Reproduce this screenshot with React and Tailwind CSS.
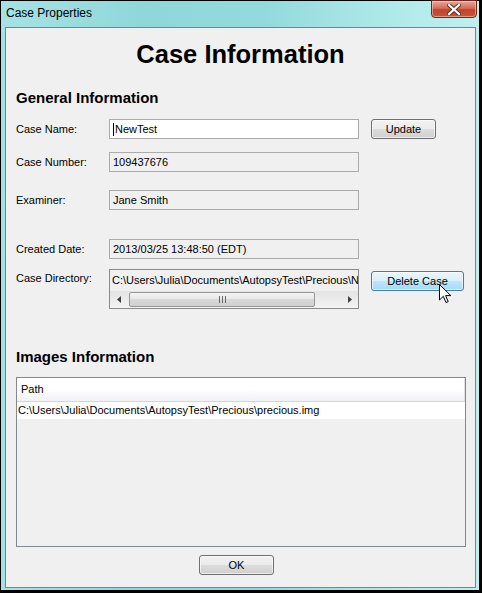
import React from "react";

const F = { fontFamily: '"Liberation Sans", Arial, sans-serif' };

function Field({ children, white, className = "" }) {
  return (
    <div
      className={`h-[20px] w-[250px] border border-[#ababab] flex items-center pl-[3px] text-[11px] text-black ${white ? "bg-white" : "bg-[#f0f0f0]"} ${className}`}
    >
      {children}
    </div>
  );
}

function Btn({ children, className = "", hot }) {
  return (
    <div
      className={`h-[20px] rounded-[3px] border flex items-center justify-center text-[11px] text-black ${
        hot
          ? "border-[#3c7fb1] bg-[linear-gradient(to_bottom,#eaf6fd_0%,#d9f0fc_50%,#bee6fd_50%,#a7d9f5_100%)]"
          : "border-[#707070] bg-[linear-gradient(to_bottom,#f2f2f2_0%,#ebebeb_50%,#dddddd_50%,#cfcfcf_100%)]"
      } shadow-[inset_0_0_0_1px_rgba(255,255,255,0.6)] ${className}`}
    >
      {children}
    </div>
  );
}

function Row({ label, children, className = "" }) {
  return (
    <div className={`flex items-center ${className}`}>
      <div className="w-[93px] text-[11px] leading-[14px] text-black">{label}</div>
      {children}
    </div>
  );
}

export default function App() {
  return (
    <div className="w-[482px] h-[593px] bg-black pt-px pl-px pr-[3px] pb-[3px]" style={F}>
      <div className="h-full w-full flex flex-col bg-[linear-gradient(to_right,#a6e2e4_0%,#8fd7d9_30%,#93dadc_55%,#b3ebeb_85%,#bfefef_100%)]">
        {/* title bar */}
        <div className="h-[26px] flex items-start shrink-0">
          <span className="ml-[5px] mt-[5px] text-[12px] leading-[14px] text-black">Case Properties</span>
          <div className="ml-auto mr-[2px] -mt-px w-[46px] h-[18px] rounded-b-[4px] border border-[#6b2a20] bg-[linear-gradient(to_bottom,#e8a898_0%,#d56c58_45%,#c2432c_55%,#c9543b_100%)] flex items-center justify-center shadow-[inset_0_0_0_1px_rgba(255,220,210,0.5)]">
            <svg width="14" height="11" viewBox="0 0 14 11">
              <path d="M2 1 L12 10 M12 1 L2 10" stroke="#5a2a22" strokeWidth="4" strokeLinecap="square" />
              <path d="M2 1 L12 10 M12 1 L2 10" stroke="#ffffff" strokeWidth="2.2" strokeLinecap="square" />
            </svg>
          </div>
        </div>
        {/* panel */}
        <div className="flex-1 ml-[4px] mr-[3px] mb-[2px] border border-[#6b8a8c] bg-[#f0f0f0] flex flex-col pl-[10px] relative">
          <div className="mt-[12px] h-[28px] text-center text-[25.5px] leading-[28px] font-bold text-black -ml-[10px]">
            Case Information
          </div>
          <div className="mt-[22px] text-[15px] leading-[16px] font-bold text-black">General Information</div>

          <Row label="Case Name:" className="mt-[13px]">
            <Field white>
              <span className="border-l border-black pl-px leading-[13px]">NewTest</span>
            </Field>
            <Btn className="ml-[12px] w-[65px]">Update</Btn>
          </Row>
          <Row label="Case Number:" className="mt-[13px]">
            <Field>109437676</Field>
          </Row>
          <Row label="Examiner:" className="mt-[18px]">
            <Field>Jane Smith</Field>
          </Row>
          <Row label="Created Date:" className="mt-[29px]">
            <Field>2013/03/25 13:48:50 (EDT)</Field>
          </Row>

          <div className="mt-[10px] flex items-start">
            <div className="w-[93px] mt-[2px] text-[11px] leading-[14px] text-black">Case Directory:</div>
            <div className="w-[250px] h-[40px] border border-[#8a8a8a] bg-[#f0f0f0] flex flex-col">
              <div className="pl-[2px] pt-[3px] text-[11px] leading-[14px] text-black whitespace-nowrap overflow-hidden">
                C:\Users\Julia\Documents\AutopsyTest\Precious\NewTest
              </div>
              <div className="mt-auto h-[17px] flex items-center bg-[linear-gradient(to_bottom,#e3e3e3,#f4f4f4)]">
                <div className="w-[17px] h-full flex items-center justify-center">
                  <svg width="4" height="7" viewBox="0 0 4 7"><path d="M4 0 L0 3.5 L4 7 Z" fill="#404040" /></svg>
                </div>
                <div className="ml-[2px] w-[186px] h-[15px] rounded-[2px] border border-[#979797] bg-[linear-gradient(to_bottom,#f3f3f3_0%,#e8e8e8_50%,#d9d9d9_50%,#cfcfcf_100%)] flex items-center justify-center">
                  <svg width="7" height="7" viewBox="0 0 7 7">
                    <path d="M0.5 0 V7 M3.5 0 V7 M6.5 0 V7" stroke="#6a6a6a" strokeWidth="1" />
                  </svg>
                </div>
                <div className="ml-auto w-[17px] h-full flex items-center justify-center">
                  <svg width="4" height="7" viewBox="0 0 4 7"><path d="M0 0 L4 3.5 L0 7 Z" fill="#404040" /></svg>
                </div>
              </div>
            </div>
            <Btn hot className="ml-[12px] mt-[2px] w-[93px]">Delete Case</Btn>
          </div>

          <div className="mt-[40px] text-[15px] leading-[16px] font-bold text-black">Images Information</div>

          <div className="mt-[12px] w-[450px] h-[170px] border border-[#828790] bg-[#f0f0f0] flex flex-col">
            <div className="h-[24px] flex items-center pl-[4px] text-[11px] text-black bg-[linear-gradient(to_bottom,#ffffff_0%,#ffffff_50%,#f1f2f4_100%)] border-b border-[#d5d5d5] shadow-[inset_-1px_0_0_#e0e0e0]">
              Path
            </div>
            <div className="h-[17px] bg-white flex items-center pl-px text-[11px] text-black whitespace-nowrap">
              C:\Users\Julia\Documents\AutopsyTest\Precious\precious.img
            </div>
          </div>

          <Btn className="mt-[8px] ml-[183px] w-[75px]">OK</Btn>

          {/* mouse cursor */}
          <svg className="absolute left-[433px] top-[256px]" width="13" height="20" viewBox="0 0 13 20">
            <path d="M0.5 0.5 V16 L4.3 12.3 L7 18.5 L9.2 17.6 L6.6 11.6 L11.8 11.6 Z" fill="#ffffff" stroke="#000000" strokeWidth="1" strokeLinejoin="miter" />
          </svg>
        </div>
      </div>
    </div>
  );
}
